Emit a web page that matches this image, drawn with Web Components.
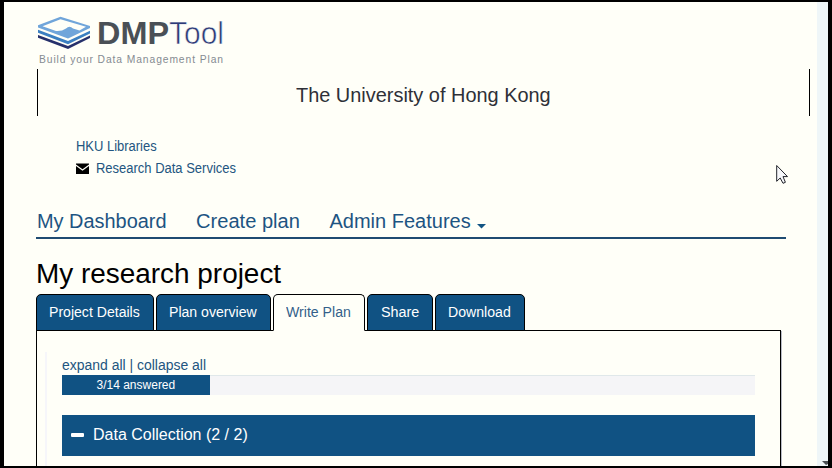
<!DOCTYPE html>
<html lang="en">
<head>
<meta charset="utf-8">
<title>DMPTool</title>
<style>
html, body { margin: 0; height: 100%; overflow: hidden; }
body { font-family: "Liberation Sans", Arial, sans-serif; background: #000; }
</style>
</head>
<body>
<app-window>
  <brand-logo></brand-logo>
  <org-banner><fit-text w="255">The University of Hong Kong</fit-text></org-banner>
  <org-links></org-links>
  <main-nav>
    <fit-text w="129.5">My Dashboard</fit-text>
    <fit-text w="103.5">Create plan</fit-text>
    <fit-text w="141">Admin Features</fit-text>
  </main-nav>
  <page-title><fit-text w="245">My research project</fit-text></page-title>
  <tab-bar>
    <tab-item style="--w:118px"><fit-text w="90.5">Project Details</fit-text></tab-item>
    <tab-item style="--w:115px"><fit-text w="87.5">Plan overview</fit-text></tab-item>
    <tab-item active style="--w:92px"><fit-text w="64.5">Write Plan</fit-text></tab-item>
    <tab-item style="--w:66px"><fit-text w="38">Share</fit-text></tab-item>
    <tab-item style="--w:90px"><fit-text w="62.5">Download</fit-text></tab-item>
  </tab-bar>
  <plan-panel>
    <expand-links></expand-links>
    <answer-progress><fit-text w="79">3/14 answered</fit-text></answer-progress>
    <section-header><fit-text w="155">Data Collection (2 / 2)</fit-text></section-header>
  </plan-panel>
</app-window>
<mouse-pointer></mouse-pointer>
<script>
function define(name, html, setup) {
  const tpl = document.createElement('template');
  tpl.innerHTML = html;
  customElements.define(name, class extends HTMLElement {
    constructor() {
      super();
      this.attachShadow({ mode: 'open' }).append(tpl.content.cloneNode(true));
    }
    connectedCallback() { if (setup) setup(this); }
  });
}

define('app-window', `<style>
:host { display: flex; box-sizing: border-box; width: 832px; height: 468px; padding: 2px 4px; background: #000; }
main { flex: 1; min-width: 0; height: 464px; overflow: hidden; background: #fffff8; display: flex; flex-direction: column; isolation: isolate; }
aside { width: 11px; height: 464px; background: #eff6f8; overflow: hidden; display: flex; align-items: flex-end; justify-content: flex-end; }
svg { display: block; }
</style><main><slot></slot></main><aside><svg width="6" height="5" viewBox="0 0 6 5"><path d="M0 0H6V3L4 4Z" fill="#4a4f53"/></svg></aside>`);

define('brand-logo', `<style>
:host { display: block; height: 67px; flex: none; }
svg { display: block; font-family: "Liberation Sans", Arial, sans-serif; }
</style><svg width="240" height="67" viewBox="4 2 240 67">
<path d="M38 35L68 46L90 35.5V38L68 49L38 37.8Z" fill="#26306b"/>
<path d="M38 29.8L68 41L90 30.8V33.4L68 44.2L38 32.8Z" fill="#3b7fc1"/>
<path d="M38 25.2L60.5 16.7L90 26V28L68 38.4L38 27.4Z" fill="#70a5da"/>
<path d="M42.5 26.2L60.5 19.3L86 26.8L79.5 30.4L73 28.4Q69.5 25.2 66 28.4Q62 31.4 56 31Z" fill="#fffff8"/>
<text x="97" y="44" font-size="31" font-weight="700" fill="#4a5056" textLength="72" lengthAdjust="spacingAndGlyphs">DMP</text>
<text x="169" y="44" font-size="31" fill="#2d3b78" stroke="#fffff8" stroke-width=".6" textLength="55" lengthAdjust="spacingAndGlyphs">Tool</text>
<text x="39" y="62.6" font-size="10.3" fill="#858b92" textLength="184">Build your Data Management Plan</text>
</svg>`);

define('org-banner', `<style>
:host { display: flex; flex: none; box-sizing: border-box; width: 773px; height: 47px; margin-left: 33px; padding-top: 5px; justify-content: center; align-items: center; border: solid #000; border-width: 0 1px; font-size: 20px; color: #2e3037; }
</style><slot></slot>`);

define('org-links', `<style>
:host { display: grid; flex: none; grid-auto-rows: 22px; margin: 19px 0 0 71.5px; font-size: 14px; color: #235580; }
div { display: flex; align-items: center; gap: 7px; }
</style><div><fit-text w="80.5">HKU Libraries</fit-text></div>
<div><svg width="13" height="11" viewBox="0 0 13 11"><path d="M0 .4H13V1.6L6.5 6.3L0 1.6ZM0 3L6.5 7.8L13 3V11H0Z" fill="#000"/></svg><fit-text w="140">Research Data Services</fit-text></div>`);

define('main-nav', `<style>
:host { display: flex; flex: none; box-sizing: border-box; width: 750px; height: 36px; margin: 24px 0 0 32px; padding: 7px 0 0 .5px; gap: 30px; border-bottom: 2px solid #1f4b72; font-size: 20px; line-height: 23px; color: #1d5482; }
svg { margin: 14px 0 0 -24px; }
</style><slot></slot><svg width="9" height="5" viewBox="0 0 9 5"><path d="M0 0H9L4.5 4.5Z" fill="#125484"/></svg>`);

define('page-title', `<style>
:host { display: block; flex: none; height: 37px; margin: 18px 0 0 32px; font-size: 27px; line-height: 34px; color: #000; }
</style><slot></slot>`);

define('tab-bar', `<style>
:host { display: flex; flex: none; gap: 2px; margin-left: 32px; }
</style><slot></slot>`);

define('tab-item', `<style>
:host { display: flex; box-sizing: border-box; width: var(--w); height: 37px; padding: 0 1px 2px 0; align-items: center; justify-content: center; border: 1px solid #000; border-radius: 5px 5px 0 0; background: #105283; color: #fff; font-size: 14px; }
:host([active]) { background: #fffff8; color: #345f8a; border-bottom-color: #fffff8; }
</style><slot></slot>`);

define('plan-panel', `<style>
:host { display: block; flex: none; box-sizing: border-box; width: 745px; height: 160px; margin: -1px 0 0 32px; padding: 21px 25px 0 8px; border: 1px solid #000; z-index: -1; position: relative; box-shadow: 1px 1px 0 #b9bcc6; }
div { border-left: 2px solid #f6f6fa; padding: 3px 0 0 15px; height: 140px; }
</style><div><slot></slot></div>`);

define('expand-links', `<style>
:host { display: flex; height: 20px; align-items: center; font-size: 14px; color: #235580; }
</style><fit-text w="144.5">expand all | collapse all</fit-text>`);

define('answer-progress', `<style>
:host { display: block; box-sizing: border-box; height: 20px; background: #f5f5f7; border-top: 1px solid #e0e8ea; }
div { width: 148px; height: 20px; margin-top: -1px; display: flex; justify-content: center; align-items: center; background: #105283; color: #fff; font-size: 12px; }
</style><div><slot></slot></div>`);

define('section-header', `<style>
:host { display: flex; box-sizing: border-box; height: 41px; margin-top: 20px; padding: 0 0 2px 9px; gap: 9px; align-items: center; background: #105283; color: #fff; font-size: 16px; }
b { width: 13px; height: 4px; border-radius: 1px; background: #fff; }
</style><b></b><slot></slot>`);

define('mouse-pointer', `<style>
:host { position: absolute; left: 776px; top: 164px; }
svg { display: block; }
</style><svg width="13" height="21" viewBox="0 0 13 21"><path d="M.7 1.5V17.3L4.2 14L7 19.3L9.4 18.3L7 12.6H11.5Z" fill="#f7f8fb" stroke="#22242c"/></svg>`);

// Sets a line of text to a given width by scaling it horizontally.
define('fit-text', `<style>
:host { display: inline-block; white-space: nowrap; flex: none; }
span { display: inline-block; transform-origin: 0 50%; }
</style><span><slot></slot></span>`, el => {
  const w = parseFloat(el.getAttribute('w'));
  const span = el.shadowRoot.querySelector('span');
  const natural = span.offsetWidth;
  el.style.width = w + 'px';
  span.style.transform = 'scaleX(' + (w / natural).toFixed(4) + ')';
});
</script>
</body>
</html>
